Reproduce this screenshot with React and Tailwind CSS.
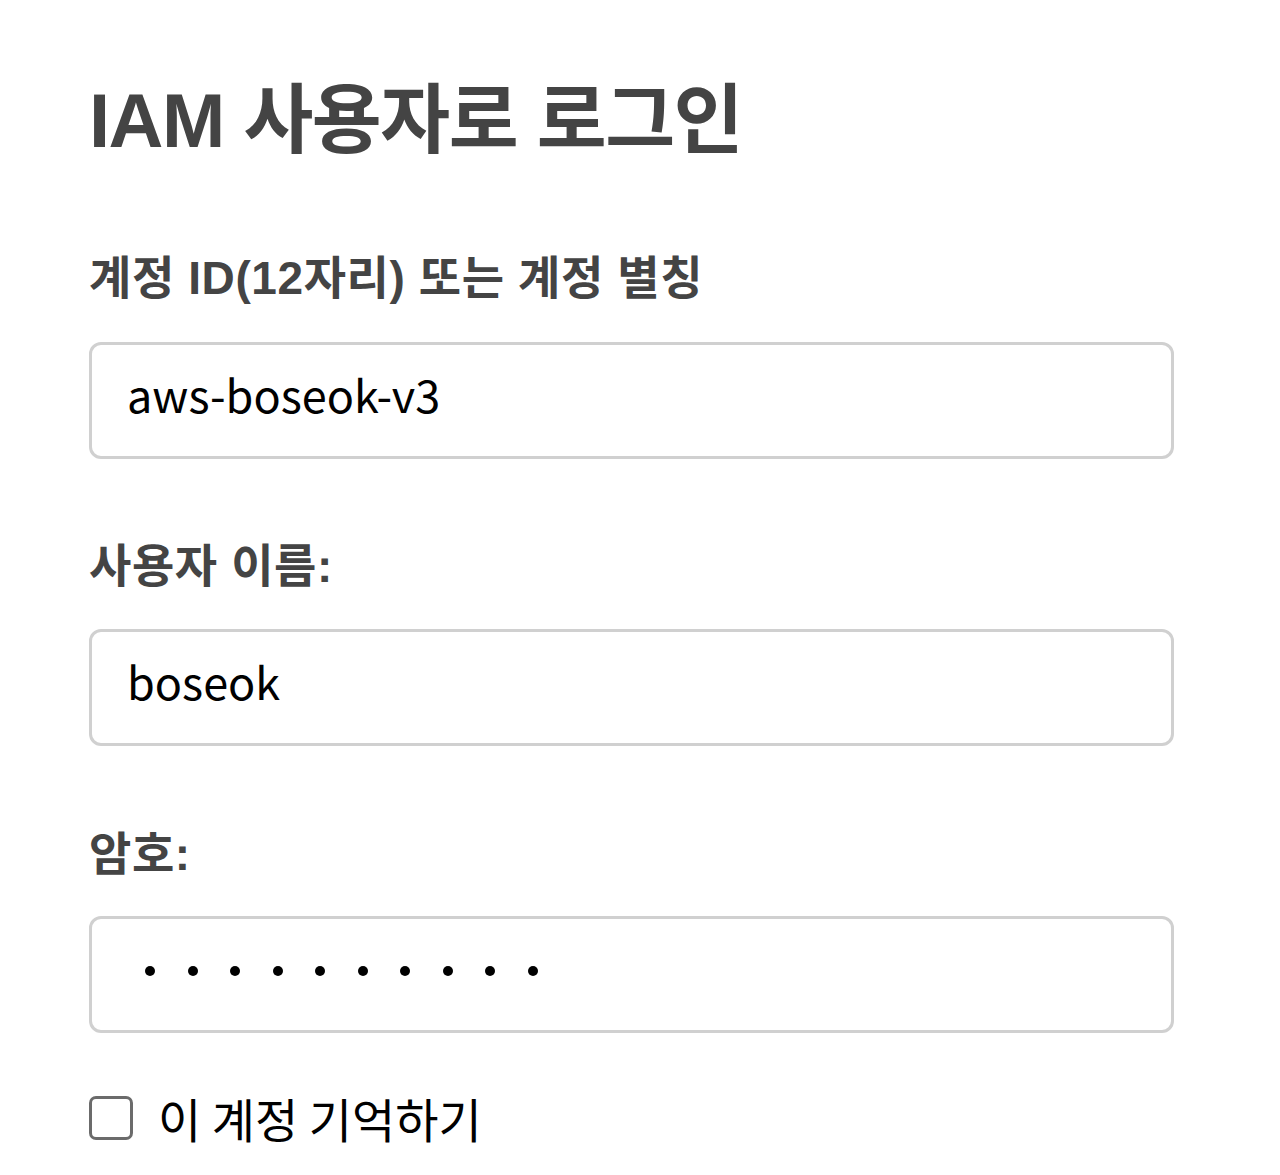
import React from 'react'

const font = { fontFamily: '"Liberation Sans", "Noto Sans CJK KR", sans-serif' }
const body = { fontFamily: '"Noto Sans CJK KR", sans-serif' }

const Field = ({ children }) => (
  <div className="h-[117px] w-[1085px] rounded-[12px] border-[3px] border-[#d0d0d0] bg-white flex items-center pl-[35px]">
    {children}
  </div>
)

const App = () => {
  return (
    <div className="min-h-screen bg-white pl-[89px] pt-[83px]" style={font}>
      <h1 className="text-[76px] leading-none font-bold text-[#444] tracking-[-1.5px]">IAM 사용자로 로그인</h1>

      {/* Account ID */}
      <label className="block mt-[96px] text-[46px] leading-none font-bold text-[#444] tracking-[0.6px]">
        계정 ID(12자리) 또는 계정 별칭
      </label>
      <div className="mt-[41px]">
        <Field>
          <span className="text-[45px] text-black mb-[14px]" style={body}>aws-boseok-v3</span>
        </Field>
      </div>

      {/* Username */}
      <label className="block mt-[84px] text-[46px] leading-none font-bold text-[#444] tracking-[0.6px]">
        사용자 이름:
      </label>
      <div className="mt-[40px]">
        <Field>
          <span className="text-[45px] text-black mb-[14px]" style={body}>boseok</span>
        </Field>
      </div>

      {/* Password */}
      <label className="block mt-[85px] text-[46px] leading-none font-bold text-[#444] tracking-[0.6px]">
        암호:
      </label>
      <div className="mt-[39px]">
        <Field>
          <div className="flex gap-[32.5px] pl-[18px] mb-[8px]">
            {Array.from({ length: 10 }).map((_, i) => (
              <span key={i} className="block w-[10px] h-[10px] rounded-full bg-black" />
            ))}
          </div>
        </Field>
      </div>

      {/* Remember */}
      <div className="mt-[61px] flex items-center gap-[25px]">
        <span className="block w-[44px] h-[44px] rounded-[7px] border-[3px] border-[#6b6b6b] bg-white" />
        <span className="text-[47px] leading-none text-black" style={body}>이 계정 기억하기</span>
      </div>
    </div>
  )
}

export default App
